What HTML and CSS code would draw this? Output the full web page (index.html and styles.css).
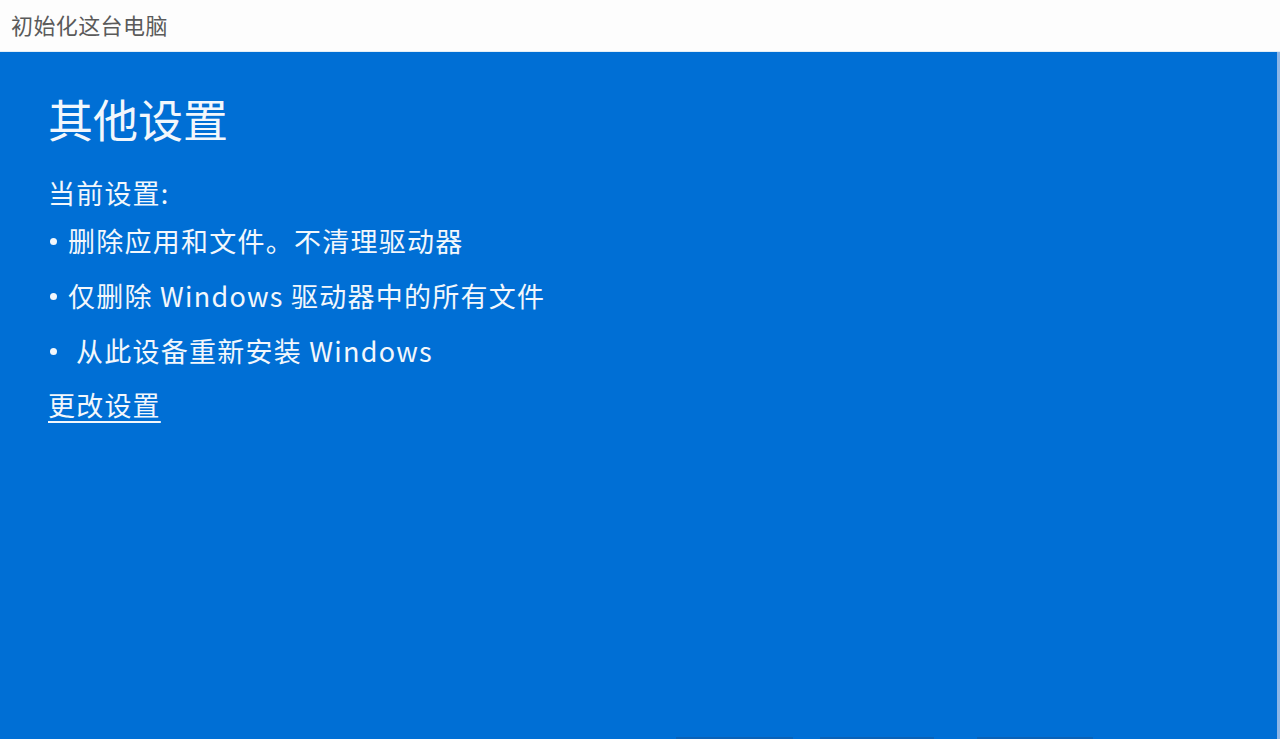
FILE: index.html
```html
<!DOCTYPE html>
<html lang="zh-CN">
<head>
<meta charset="utf-8">
<link rel="stylesheet" href="styles.css">
</head>
<body>
<div class="window">
  <header class="titlebar">初始化这台电脑</header>
  <main class="content">
    <h1 class="heading">其他设置</h1>
    <p class="label">当前设置:</p>
    <ul class="list">
      <li>删除应用和文件。不清理驱动器</li>
      <li>仅删除 Windows 驱动器中的所有文件</li>
      <li class="wide">从此设备重新安装 Windows</li>
    </ul>
    <a class="link" href="#">更改设置</a>
    <div class="buttons">
      <span class="btn b1"></span>
      <span class="btn b2"></span>
      <span class="btn b3"></span>
    </div>
  </main>
</div>
</body>
</html>
```
FILE: styles.css
```css
html, body {
  margin: 0;
  padding: 0;
  width: 1280px;
  height: 739px;
  overflow: hidden;
  background: #0070d6;
}
.window {
  display: flex;
  flex-direction: column;
  width: 1280px;
  height: 739px;
  font-family: "Noto Sans CJK SC", "Noto Sans", sans-serif;
}
.titlebar {
  height: 52px;
  box-sizing: border-box;
  background: #fdfdfd;
  color: #5a5a5a;
  font-size: 22px;
  line-height: 48px;
  padding-left: 11px;
  letter-spacing: 0.4px;
  border-bottom: 1px solid #e2eef6;
}
.content {
  flex: 1;
  position: relative;
  background: #006fd5;
  color: #f2f7fc;
  padding: 0 0 0 48px;
  border-right: 3px solid #8cb6e6;
}
.heading {
  margin: 39px 0 0 0;
  font-size: 45px;
  font-weight: 400;
  line-height: 56px;
  letter-spacing: 0;
}
.label {
  margin: 26px 0 0 0;
  font-size: 27px;
  line-height: 40px;
  letter-spacing: 1.2px;
}
.list {
  list-style: none;
  margin: 0;
  padding: 0;
  font-size: 27px;
  line-height: 55px;
  letter-spacing: 1.25px;
}
.list li {
  display: flex;
  align-items: center;
}
.list li::before {
  content: "";
  width: 7px;
  height: 7px;
  border-radius: 50%;
  background: #f2f7fc;
  margin: 2px 11px 0 2px;
  flex: none;
}
.list li.wide::before {
  margin-right: 19px;
}
.link {
  display: inline-block;
  margin-top: 9px;
  font-size: 27px;
  line-height: 36px;
  color: #f2f7fc;
  letter-spacing: 1.2px;
  text-decoration: underline;
  text-underline-offset: 5px;
  text-decoration-thickness: 2px;
}
.buttons {
  position: absolute;
  left: 0;
  right: 0;
  bottom: 0;
  height: 3px;
}
.btn {
  position: absolute;
  bottom: 0;
  height: 2px;
  background: #0a62b8;
}
.b1 { left: 676px; width: 117px; }
.b2 { left: 820px; width: 114px; }
.b3 { left: 977px; width: 116px; }
```
